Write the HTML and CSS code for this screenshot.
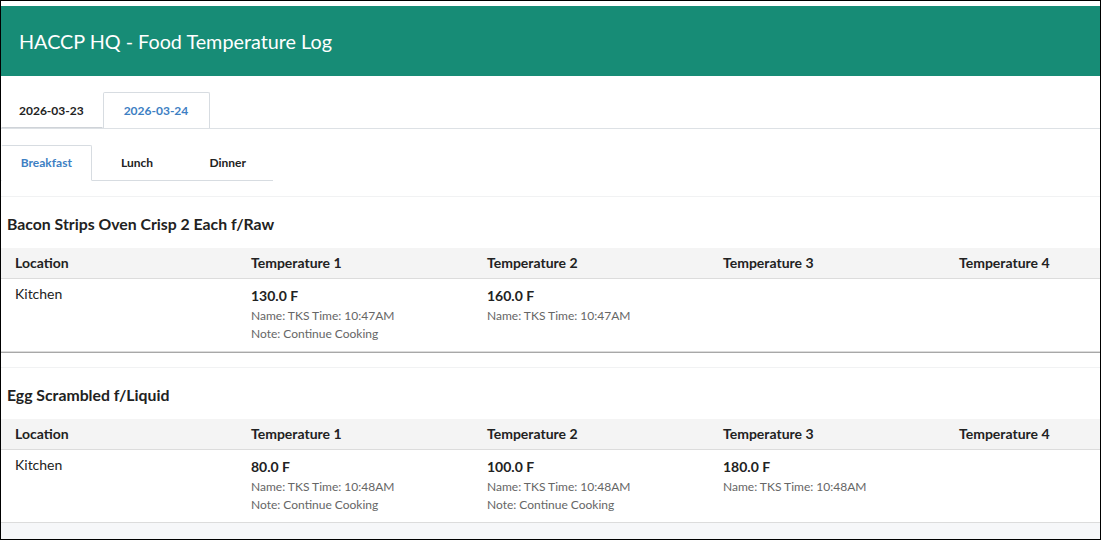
FILE: index.html
```html
<!DOCTYPE HTML>
<html>
    <head>
    <title>HACCP HQ - Food Temperature Log</title>
    <link rel="stylesheet" href="styles.css">
    </head>
    <body>
        <div id="header">HACCP HQ - Food Temperature Log</div>

        <div class="date-tabs">
            <a class="tab first">2026-03-23</a>
            <a class="tab active">2026-03-24</a>
        </div>

        <div class="meal-tabs">
            <a class="meal active">Breakfast</a>
            <a class="meal">Lunch</a>
            <a class="meal">Dinner</a>
        </div>

        <div class="item item-first">
            <h2>Bacon Strips Oven Crisp 2 Each f/Raw</h2>
            <div class="log">
                <div class="row head">
                    <div class="cell">Location</div>
                    <div class="cell">Temperature 1</div>
                    <div class="cell">Temperature 2</div>
                    <div class="cell">Temperature 3</div>
                    <div class="cell">Temperature 4</div>
                </div>
                <div class="row">
                    <div class="cell place">Kitchen</div>
                    <div class="cell">
                        <div class="temp">130.0 F</div>
                        <div class="meta">Name: TKS Time: 10:47AM</div>
                        <div class="meta">Note: Continue Cooking</div>
                    </div>
                    <div class="cell">
                        <div class="temp">160.0 F</div>
                        <div class="meta">Name: TKS Time: 10:47AM</div>
                    </div>
                    <div class="cell"></div>
                    <div class="cell"></div>
                </div>
            </div>
        </div>

        <div class="item">
            <h2>Egg Scrambled f/Liquid</h2>
            <div class="log">
                <div class="row head">
                    <div class="cell">Location</div>
                    <div class="cell">Temperature 1</div>
                    <div class="cell">Temperature 2</div>
                    <div class="cell">Temperature 3</div>
                    <div class="cell">Temperature 4</div>
                </div>
                <div class="row">
                    <div class="cell place">Kitchen</div>
                    <div class="cell">
                        <div class="temp">80.0 F</div>
                        <div class="meta">Name: TKS Time: 10:48AM</div>
                        <div class="meta">Note: Continue Cooking</div>
                    </div>
                    <div class="cell">
                        <div class="temp">100.0 F</div>
                        <div class="meta">Name: TKS Time: 10:48AM</div>
                        <div class="meta">Note: Continue Cooking</div>
                    </div>
                    <div class="cell">
                        <div class="temp">180.0 F</div>
                        <div class="meta">Name: TKS Time: 10:48AM</div>
                    </div>
                    <div class="cell"></div>
                </div>
            </div>
        </div>

        <div class="page-end"></div>
    </body>
</html>
```

FILE: styles.css
```css
 html {
     background: #fff;
 }

 body {
     margin: 0;
     height: 540px;
     box-sizing: border-box;
     border: 1px solid #000;
     padding-top: 5px;
     overflow: hidden;
     display: flex;
     flex-direction: column;
     background: #fff;
     font-family: Lato, "Open Sans", sans-serif;
     color: #222;
 }

 #header {
     flex: none;
     height: 70px;
     line-height: 70px;
     padding-left: 18px;
     background: #178c76;
     color: #fff;
     font-size: 19.8px;
 }

 /* date tabs */
 .date-tabs {
     flex: none;
     display: flex;
     padding-top: 16px;
     border-bottom: 1px solid #dde1e5;
 }

 .tab {
     height: 35px;
     line-height: 35px;
     padding: 0 21px 0 20px;
     border: 1px solid transparent;
     border-bottom: 0;
     font-size: 12px;
     font-weight: bold;
     color: #222;
 }

 .tab.first {
     padding-left: 17px;
     padding-right: 18px;
     border-bottom: 1px solid #cfd3d8;
     height: 34px;
 }

 .tab.active {
     border-color: #d7dce1;
     border-radius: 2px 2px 0 0;
     color: #3d80c3;
 }

 /* meal tabs */
 .meal-tabs {
     flex: none;
     display: flex;
     width: 272px;
     padding-top: 16px;
     border-bottom: 1px solid #d7dce1;
 }

 .meal {
     flex: 1 1 0;
     height: 34px;
     line-height: 34px;
     margin-bottom: -1px;
     text-align: center;
     border: 1px solid transparent;
     font-size: 12px;
     font-weight: bold;
     color: #222;
 }

 .meal.active {
     border-color: #d7dce1;
     border-bottom-color: #fff;
     border-left-color: transparent;
     border-radius: 2px 2px 0 0;
     color: #3d80c3;
 }

 /* food items */
 .item {
     flex: none;
     margin-top: 14px;
     border-top: 1px solid #f1f2f3;
 }

 .item-first {
     margin-top: 15px;
     border-bottom: 1px solid #a8a8a8;
 }

 h2 {
     margin: 0;
     padding: 17px 6px 14px;
     line-height: 20px;
     font-size: 15.8px;
     font-weight: bold;
 }

 .log {
     overflow: hidden;
 }

 .row {
     display: grid;
     grid-template-columns: repeat(5, 236px);
     border-bottom: 1px solid #dcdcdc;
 }

 .row.head {
     height: 30px;
     background: #f4f4f4;
 }

 .cell {
     padding: 6px 14px 8px;
     font-size: 14px;
     line-height: 18px;
 }

 .head .cell {
     padding: 0 14px;
     line-height: 30px;
     font-weight: bold;
 }

 .temp {
     font-size: 14px;
     font-weight: bold;
     line-height: 22px;
 }

 .meta {
     font-size: 12px;
     line-height: 18px;
     color: #666;
 }

 .page-end {
     flex: 1;
     background: #f6f7f9;
 }
```
